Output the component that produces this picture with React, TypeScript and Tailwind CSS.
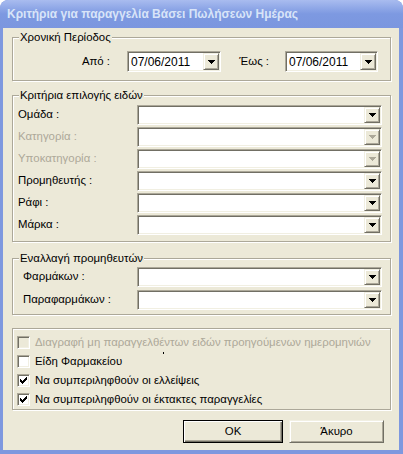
import React from "react";

function Arrow({ disabled }: { disabled?: boolean }) {
  return (
    <svg width="7" height="4" viewBox="0 0 7 4" shapeRendering="crispEdges">
      <path d="M0 0h7v1h-1v1h-1v1h-1v1h-1v-1h-1v-1h-1v-1h-1z" fill={disabled ? "#ACA899" : "#000"} />
    </svg>
  );
}

function DropBtn({ disabled }: { disabled?: boolean }) {
  return (
    <div className="w-[16px] h-full shrink-0 flex items-center justify-center bg-[#ECE9D8] border border-t-[#F1EFE2] border-l-[#F1EFE2] border-b-[#716F64] border-r-[#716F64] shadow-[inset_1px_1px_0_#fff,inset_-1px_-1px_0_#ACA899]">
      <Arrow disabled={disabled} />
    </div>
  );
}

function Combo({ className, text, disabled }: { className: string; text?: string; disabled?: boolean }) {
  return (
    <div
      className={
        "flex bg-white p-[1px] border border-t-[#ACA899] border-l-[#ACA899] border-b-white border-r-white shadow-[inset_1px_1px_0_#716F64,inset_-1px_-1px_0_#F1EFE2] " +
        className
      }
    >
      <div className="flex-1 flex items-center pl-[2px] text-[12px] leading-none">{text}</div>
      <DropBtn disabled={disabled} />
    </div>
  );
}

function Check({ checked, disabled }: { checked?: boolean; disabled?: boolean }) {
  return (
    <div
      className={
        "w-[13px] h-[13px] shrink-0 flex items-center justify-center border border-t-[#ACA899] border-l-[#ACA899] border-b-white border-r-white shadow-[inset_1px_1px_0_#716F64,inset_-1px_-1px_0_#F1EFE2] " +
        (disabled ? "bg-[#ECE9D8]" : "bg-white")
      }
    >
      {checked && (
        <svg width="7" height="7" viewBox="0 0 7 7" shapeRendering="crispEdges">
          <path d="M6 0h1v3h-1v1h-1v1h-1v1h-1v1h-1v-1h-1v-1h-1v-3h1v1h1v1h1v-1h1v-1h1z" fill="#000" />
        </svg>
      )}
    </div>
  );
}

const legendCls = "ml-[6px] px-[1px] leading-[14px] bg-[#ECE9D8]";
const fieldsetCls =
  "border border-[#ACA899] shadow-[inset_1px_1px_0_#fff,1px_1px_0_#fff] min-w-0";

export default function App() {
  const rows2: { label: string; disabled?: boolean }[] = [
    { label: "Ομάδα :" },
    { label: "Κατηγορία :", disabled: true },
    { label: "Υποκατηγορία :", disabled: true },
    { label: "Προμηθευτής :" },
    { label: "Ράφι :" },
    { label: "Μάρκα :" },
  ];
  return (
    <div className="w-[403px] h-[454px] flex flex-col bg-[#7E98DF] rounded-t-[8px] font-['Liberation_Sans',Arial,sans-serif] text-[11.4px] text-black overflow-hidden">
      <div className="h-[28px] shrink-0 flex items-center pl-[7px] bg-linear-to-b from-[#A9BCEF] via-[#7D99E1] to-[#7B96DF] rounded-t-[8px]">
        <span className="text-[12px] font-bold text-[#D8E4F8]">
          Κριτήρια για παραγγελία Βάσει Πωλήσεων Ημέρας
        </span>
      </div>
      <div className="flex-1 ml-[3px] mr-[4px] mb-[4px] bg-[#ECE9D8] flex flex-col pl-[9px] pr-[8px]">
        <fieldset className={fieldsetCls + " mt-[2px]"}>
          <legend className={legendCls}>Χρονική Περίοδος</legend>
          <div className="flex items-center pt-[7px] pb-[8px]">
            <span className="w-[97px] text-right">Από :</span>
            <Combo className="ml-[17px] w-[94px] h-[21px]" text="07/06/2011" />
            <span className="w-[48px] text-right">Έως :</span>
            <Combo className="ml-[16px] w-[93px] h-[21px]" text="07/06/2011" />
          </div>
        </fieldset>

        <fieldset className={fieldsetCls + " mt-[7px]"}>
          <legend className={legendCls}>Κριτήρια επιλογής ειδών</legend>
          <div className="flex flex-col gap-[2px] pt-[3px] pb-[6px] pl-[5px]">
            {rows2.map((r) => (
              <div key={r.label} className="flex items-center h-[20px]">
                <span className={"w-[119px] " + (r.disabled ? "text-[#ACA899]" : "")}>{r.label}</span>
                <Combo className="w-[245px] h-[20px]" disabled={r.disabled} />
              </div>
            ))}
          </div>
        </fieldset>

        <fieldset className={fieldsetCls + " mt-[9px]"}>
          <legend className={legendCls}>Εναλλαγή προμηθευτών</legend>
          <div className="flex flex-col gap-[3px] pt-[2px] pb-[4px] pl-[10px]">
            <div className="flex items-center h-[20px]">
              <span className="w-[114px]">Φαρμάκων :</span>
              <Combo className="w-[245px] h-[20px]" />
            </div>
            <div className="flex items-center h-[20px]">
              <span className="w-[114px]">Παραφαρμάκων :</span>
              <Combo className="w-[245px] h-[20px]" />
            </div>
          </div>
        </fieldset>

        <div className={fieldsetCls + " relative mt-[13px] pt-[4px] pl-[4px] flex flex-col"}>
          <div className="flex items-center gap-[5px] h-[19px]">
            <Check disabled />
            <span className="text-[#ACA899]">Διαγραφή μη παραγγελθέντων ειδών προηγούμενων ημερομηνιών</span>
          </div>
          <div className="flex items-center gap-[5px] h-[19px]">
            <Check />
            <span>Είδη Φαρμακείου</span>
          </div>
          <div className="flex items-center gap-[5px] h-[19px]">
            <Check checked />
            <span>Να συμπεριληφθούν οι ελλείψεις</span>
          </div>
          <div className="flex items-center gap-[5px] h-[19px]">
            <Check checked />
            <span>Να συμπεριληφθούν οι έκτακτες παραγγελίες</span>
          </div>
          <span className="absolute left-[150px] top-[23px] w-[1px] h-[2px] bg-black" />
        </div>

        <div className="flex justify-end gap-[6px] mt-[10px] pr-[7px]">
          <button className="w-[100px] h-[23px] border border-black bg-[#ECE9D8] shadow-[inset_1px_1px_0_#fff,inset_-1px_-1px_0_#716F64,inset_-2px_-2px_0_#ACA899] text-[11.4px]">
            OK
          </button>
          <button className="w-[95px] h-[23px] border border-t-[#F1EFE2] border-l-[#F1EFE2] border-b-[#716F64] border-r-[#716F64] bg-[#ECE9D8] shadow-[inset_1px_1px_0_#fff,inset_-1px_-1px_0_#ACA899] text-[11.4px]">
            Άκυρο
          </button>
        </div>
      </div>
    </div>
  );
}
